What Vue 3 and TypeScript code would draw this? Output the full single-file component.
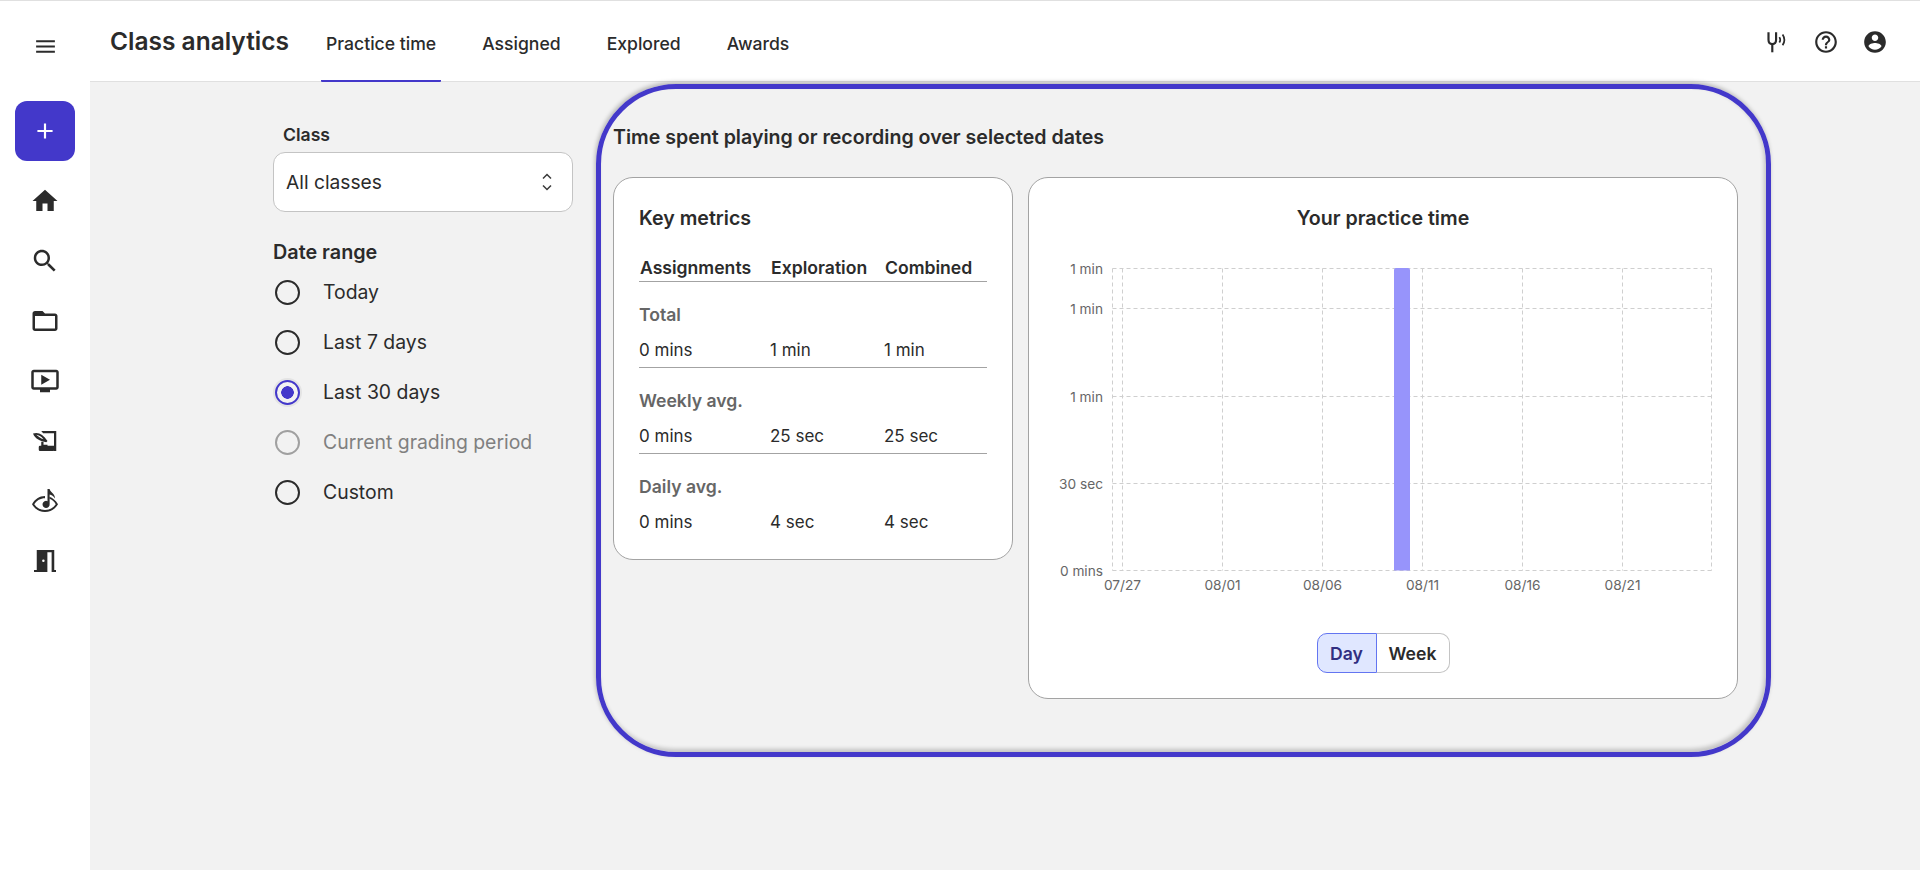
<template>
  <div class="page">
    <aside class="rail">
      <button class="rail-btn menu-btn" aria-label="Menu">
        <svg viewBox="0 0 24 24"><path d="M3 18h18v-2H3v2zm0-5h18v-2H3v2zm0-7v2h18V6H3z" /></svg>
      </button>
      <button class="add-btn" aria-label="Add">
        <svg viewBox="0 0 24 24"><path d="M19 13h-6v6h-2v-6H5v-2h6V5h2v6h6v2z" /></svg>
      </button>
      <button v-for="icon in railIcons" :key="icon.name" class="rail-btn" :aria-label="icon.name">
        <svg viewBox="0 0 24 24"><path v-for="d in icon.paths" :key="d" :d="d" fill-rule="evenodd" /></svg>
      </button>
    </aside>

    <div class="body">
      <header class="topbar">
        <h1 class="page-title">Class analytics</h1>
        <nav class="tabs">
          <a v-for="(tab, i) in tabs" :key="tab" class="tab" :class="{ active: i === 0 }">{{ tab }}</a>
        </nav>
        <div class="top-icons">
          <svg class="fork" viewBox="0 0 24 24">
            <path d="M6 3v7c0 2.5 1.500 4 3.500 4s3.500-1.500 3.500-4V3" />
            <path d="M9.500 14v7.500" />
            <path class="wave" d="M16 7.500c1 1.500 1 3.500 0 5" />
            <path class="wave" d="M19 5c2 3 2 7 0 10" />
          </svg>
          <svg viewBox="0 0 24 24"><path d="M11 18h2v-2h-2v2zm1-16C6.48 2 2 6.48 2 12s4.48 10 10 10 10-4.48 10-10S17.52 2 12 2zm0 18c-4.41 0-8-3.59-8-8s3.59-8 8-8 8 3.59 8 8-3.59 8-8 8zm0-14c-2.21 0-4 1.79-4 4h2c0-1.1.9-2 2-2s2 .9 2 2c0 2-3 1.75-3 5h2c0-2.25 3-2.5 3-5 0-2.21-1.79-4-4-4z" /></svg>
          <svg viewBox="0 0 24 24"><path d="M12 2C6.48 2 2 6.48 2 12s4.48 10 10 10 10-4.48 10-10S17.52 2 12 2zm0 3c1.66 0 3 1.34 3 3s-1.34 3-3 3-3-1.34-3-3 1.34-3 3-3zm0 14.2c-2.5 0-4.71-1.28-6-3.22.03-1.99 4-3.08 6-3.08 1.99 0 5.97 1.09 6 3.08-1.29 1.94-3.5 3.22-6 3.22z" /></svg>
        </div>
      </header>

      <main class="content">
        <section class="filters">
          <label class="class-label">Class</label>
          <div class="select">
            <span>All classes</span>
            <svg viewBox="0 0 12 20" class="chevrons"><path d="M2 6.500 6 2.500l4 4M2 13.500l4 4 4-4" /></svg>
          </div>
          <h3 class="range-title">Date range</h3>
          <div class="radios">
            <div v-for="opt in ranges" :key="opt.label" class="radio-row" :class="{ disabled: opt.disabled }">
              <span class="radio" :class="{ checked: opt.checked }"></span>
              <span>{{ opt.label }}</span>
            </div>
          </div>
        </section>

        <section class="focus">
          <h2 class="focus-title">Time spent playing or recording over selected dates</h2>
          <div class="cards">
            <div class="card metrics">
              <h3 class="card-title">Key metrics</h3>
              <div class="metric-head">
                <span>Assignments</span>
                <span>Exploration</span>
                <span>Combined</span>
              </div>
              <div v-for="m in metrics" :key="m.label" class="metric-group">
                <div class="metric-label">{{ m.label }}</div>
                <div class="metric-row">
                  <span v-for="(v, i) in m.values" :key="i">{{ v }}</span>
                </div>
              </div>
            </div>

            <div class="card chart-card">
              <h3 class="card-title centered">Your practice time</h3>
              <svg class="chart" width="707" height="400" viewBox="0 0 707 400">
                <g class="grid">
                  <line v-for="y in gridY" :key="y" :x1="plot.left" :x2="plot.right" :y1="y" :y2="y" />
                  <line v-for="x in gridX" :key="x" :x1="x" :x2="x" :y1="plot.top" :y2="plot.bottom" />
                </g>
                <path class="bar" d="M365 337.500V37a2 2 0 0 1 2-2h12a2 2 0 0 1 2 2V337.500z" />
                <g class="ticks">
                  <text v-for="t in yTicks" :key="t.y" :x="74" :y="t.y + 6" text-anchor="end">{{ t.label }}</text>
                  <text v-for="t in xTicks" :key="t.x" :x="t.x" :y="357" text-anchor="middle">{{ t.label }}</text>
                </g>
              </svg>
              <div class="toggle">
                <button class="seg on">Day</button>
                <button class="seg">Week</button>
              </div>
            </div>
          </div>
        </section>
      </main>
    </div>
  </div>
</template>

<script setup lang="ts">
const tabs = ['Practice time', 'Assigned', 'Explored', 'Awards']

const railIcons = [
  { name: 'Home', paths: ['M10 20v-6h4v6h5v-8h3L12 3 2 12h3v8z'] },
  {
    name: 'Search',
    paths: [
      'M15.5 14h-.79l-.28-.27C15.41 12.59 16 11.11 16 9.5 16 5.91 13.09 3 9.5 3S3 5.91 3 9.5 5.91 16 9.5 16c1.61 0 3.09-.59 4.23-1.57l.27.28v.79l5 4.99L20.49 19l-4.99-5zm-6 0C7.01 14 5 11.99 5 9.5S7.01 5 9.5 5 14 7.01 14 9.5 11.99 14 9.5 14z',
    ],
  },
  {
    name: 'Library',
    paths: ['M20 6h-8l-2-2H4c-1.1 0-1.99.9-1.99 2L2 18c0 1.1.9 2 2 2h16c1.1 0 2-.9 2-2V8c0-1.1-.9-2-2-2zm0 12H4V8h16v10z'],
  },
  {
    name: 'Videos',
    paths: ['M21 3H3c-1.11 0-2 .89-2 2v12c0 1.1.89 2 2 2h5v2h8v-2h5c1.1 0 1.99-.9 1.99-2L23 5c0-1.11-.9-2-2-2zm0 14H3V5h18v12zm-5-6l-7 4V7z'],
  },
  {
    name: 'Assignments',
    paths: [
      'M9 4h12v16h-1.8V5.8H10.5z',
      'M2.4 6C6.5 4.5 10.5 6.5 14 12L13 13C8.5 12 4 10.5 2.4 6zM5 7C6.5 8.5 8.5 9.8 10.8 10.6 9 8.3 7 7.2 5 7z',
      'M9 12.5h1.8V15H14v1.5H9z',
      'M8 15.8h11.5V19a1 1 0 0 1-1 1H8a1 1 0 0 1-1-1v-2.200a1 1 0 0 1 1-1z',
    ],
  },
  {
    name: 'Listening',
    paths: [
      'M12 8C7.5 8 3.8 10.7 1.600 14.500 3.800 18.300 7.500 20.800 12 20.800s8.200-2.500 10.400-6.300C20.600 11.400 18 9.300 15.500 8.500v1.700c2.100.7 3.900 2.300 5.100 4.300-2 3-4.900 4.700-8.600 4.700s-6.600-1.700-8.600-4.700C5.300 11.500 8.300 9.700 12 9.700z',
      'M14 2.400h1.700c.2 2.400 4.300 3.500 4.300 7.500-1-1.700-2.800-2.800-4.300-3.100V14.500A2.850 2.850 0 1 1 14 12.100z',
    ],
  },
  {
    name: 'Exit',
    paths: ['M5.400 3.200H19.400V19.200H20.800V20.800H17.300V5H13.900V20.800H3.200V19.200H5.400zM10.700 10.700a1 1 0 1 0 0 2 1 1 0 0 0 0-2z'],
  },
]

const ranges = [
  { label: 'Today' },
  { label: 'Last 7 days' },
  { label: 'Last 30 days', checked: true },
  { label: 'Current grading period', disabled: true },
  { label: 'Custom' },
]

const metrics = [
  { label: 'Total', values: ['0 mins', '1 min', '1 min'] },
  { label: 'Weekly avg.', values: ['0 mins', '25 sec', '25 sec'] },
  { label: 'Daily avg.', values: ['0 mins', '4 sec', '4 sec'] },
]

// chart coordinates inside the svg
const plot = { left: 83.5, right: 682.5, top: 35.5, bottom: 337.5 }
const gridY = [35.5, 75.5, 163.5, 250.5, 337.5]
const gridX = [83.5, 93.5, 193.5, 293.5, 393.5, 493.5, 593.5, 682.5]
const yTicks = [
  { y: 35, label: '1 min' },
  { y: 75, label: '1 min' },
  { y: 163, label: '1 min' },
  { y: 250, label: '30 sec' },
  { y: 337, label: '0 mins' },
]
const xTicks = [
  { x: 93.5, label: '07/27' },
  { x: 193.5, label: '08/01' },
  { x: 293.5, label: '08/06' },
  { x: 393.5, label: '08/11' },
  { x: 493.5, label: '08/16' },
  { x: 593.5, label: '08/21' },
]
</script>

<style>
html,
body {
  margin: 0;
  background: #f2f2f2;
}
</style>

<style scoped>
.page {
  display: flex;
  min-height: 870px;
  font-family: Inter, "Liberation Sans", sans-serif;
  color: #2b2b2b;
  background: #f2f2f2;
  border-top: 1px solid #e0e0e0;
  box-sizing: border-box;
}

.rail {
  width: 90px;
  flex: none;
  background: #fff;
  display: flex;
  flex-direction: column;
  align-items: center;
}

.rail-btn {
  width: 60px;
  height: 60px;
  flex: none;
  padding: 0;
  border: none;
  background: none;
  display: flex;
  align-items: center;
  justify-content: center;
}

.rail-btn svg {
  width: 30px;
  height: 30px;
  flex: none;
  fill: #2b2b2b;
}

.menu-btn {
  height: 24px;
  margin: 33px 0 43px;
}

.menu-btn svg {
  width: 25px;
  height: 25px;
}

.add-btn {
  width: 60px;
  height: 60px;
  flex: none;
  padding: 0;
  margin-bottom: 10px;
  border: none;
  border-radius: 12px;
  background: #4338ca;
  display: flex;
  align-items: center;
  justify-content: center;
}

.add-btn svg {
  width: 26px;
  height: 26px;
  fill: #fff;
}

.body {
  flex: 1;
  min-width: 0;
  display: flex;
  flex-direction: column;
}

.topbar {
  height: 81px;
  box-sizing: border-box;
  background: #fff;
  border-bottom: 1px solid #e0e0e0;
  display: flex;
  align-items: stretch;
  padding-left: 20px;
}

.page-title {
  margin: 0;
  padding-top: 25px;
  font-size: 24.5px;
  line-height: 30px;
  font-weight: 600;
  white-space: nowrap;
}

.tabs {
  display: flex;
  margin-left: 32px;
  gap: 36px;
}

.tab {
  padding: 32px 5px 0;
  font-size: 17.6px;
  line-height: 22px;
  font-weight: 500;
  white-space: nowrap;
  margin-bottom: -1px;
  border-bottom: 2px solid transparent;
  box-sizing: border-box;
}

.tab.active {
  border-bottom-color: #4338ca;
  border-radius: 0 0 1px 1px;
}

.top-icons {
  margin-left: auto;
  display: flex;
  align-items: center;
  gap: 23px;
  padding: 1px 32px 0 0;
}

.top-icons svg {
  width: 26px;
  height: 26px;
  fill: #2b2b2b;
}

.top-icons .fork {
  fill: none;
  stroke: #2b2b2b;
  stroke-width: 2;
  margin-right: 2px;
}

.fork .wave {
  stroke-width: 1.6;
}

.content {
  display: flex;
  align-items: flex-start;
  padding: 2px 0 0 183px;
}

.filters {
  width: 300px;
  flex: none;
  margin-top: 41px;
}

.class-label {
  display: block;
  margin-left: 10px;
  font-size: 17.6px;
  line-height: 20px;
  font-weight: 600;
}

.select {
  height: 60px;
  margin-top: 7px;
  box-sizing: border-box;
  padding: 0 19px 0 12px;
  display: flex;
  align-items: center;
  justify-content: space-between;
  background: #fff;
  border: 1px solid #c4c4c4;
  border-radius: 12px;
  font-size: 19.2px;
}

.chevrons {
  width: 12px;
  height: 20px;
  fill: none;
  stroke: #3a3a3a;
  stroke-width: 1.5;
}

.range-title {
  margin: 28px 0 0;
  font-size: 19.8px;
  line-height: 24px;
  font-weight: 600;
}

.radios {
  margin-top: 3px;
}

.radio-row {
  height: 50px;
  display: flex;
  align-items: center;
  gap: 23px;
  font-size: 19.4px;
  padding-left: 2px;
}

.radio-row.disabled {
  color: #808080;
}

.radio {
  width: 25px;
  height: 25px;
  flex: none;
  box-sizing: border-box;
  border: 2.7px solid #2b2b2b;
  border-radius: 50%;
}

.radio-row.disabled .radio {
  border-color: #a0a0a0;
}

.radio.checked {
  border-color: #4338ca;
  background: radial-gradient(circle, #4338ca 0 6px, transparent 6.5px);
  box-shadow: 0 0 0 2px #e4e4e4;
}

.focus {
  width: 1175px;
  height: 673px;
  flex: none;
  box-sizing: border-box;
  margin-left: 23px;
  padding: 36px 28px 0 12px;
  border: 5px solid #4338ca;
  border-radius: 80px;
  box-shadow: -1px -2px 4px rgba(0, 0, 0, 0.25), inset -2px -3px 4px rgba(0, 0, 0, 0.2);
}

.focus-title {
  margin: 0;
  font-size: 19.6px;
  line-height: 24px;
  font-weight: 600;
  white-space: nowrap;
}

.cards {
  display: flex;
  align-items: flex-start;
  gap: 15px;
  margin-top: 28px;
}

.card {
  box-sizing: border-box;
  background: #fff;
  border: 1px solid #a3a3a3;
  border-radius: 20px;
}

.metrics {
  width: 400px;
  height: 383px;
  padding: 25px 25px 0;
}

.card-title {
  margin: 0;
  font-size: 19.6px;
  line-height: 30px;
  font-weight: 600;
}

.card-title.centered {
  text-align: center;
}

.metric-head {
  display: grid;
  grid-template-columns: 131px 114px 1fr;
  margin-top: 24px;
  padding: 0 0 2px 1px;
  font-size: 17.6px;
  line-height: 22px;
  font-weight: 600;
  border-bottom: 1px solid #a3a3a3;
}

.metric-group {
  padding-top: 22px;
  height: 86px;
  box-sizing: border-box;
  border-bottom: 1px solid #a3a3a3;
}

.metric-group:last-child {
  border-bottom: none;
}

.metric-label {
  font-size: 17.6px;
  line-height: 22px;
  font-weight: 600;
  color: #666;
}

.metric-row {
  display: grid;
  grid-template-columns: 131px 114px 1fr;
  margin-top: 13px;
  font-size: 17px;
  line-height: 22px;
}

.chart-card {
  width: 710px;
  height: 522px;
  padding-top: 25px;
  display: flex;
  flex-direction: column;
  align-items: center;
}

.card-title.centered {
  align-self: stretch;
}

.chart {
  display: block;
  flex: none;
  align-self: flex-start;
  overflow: visible;
}

.grid line {
  stroke: #cfcfcf;
  stroke-width: 1;
  stroke-dasharray: 4 3;
}

.bar {
  fill: #9794fb;
}

.ticks text {
  font-size: 13.7px;
  fill: #666;
  font-family: Inter, "Liberation Sans", sans-serif;
}

.toggle {
  display: flex;
}

.seg {
  width: 73px;
  height: 40px;
  box-sizing: border-box;
  padding: 0;
  font-family: inherit;
  font-size: 17.6px;
  font-weight: 600;
  color: #2b2b2b;
  background: #fff;
  border: 1px solid #c4c4c4;
  border-left: none;
  border-radius: 0 10px 10px 0;
}

.seg.on {
  width: 60px;
  color: #312e81;
  background: #e0e7ff;
  border: 1px solid #6375f1;
  border-radius: 10px 0 0 10px;
}
</style>
